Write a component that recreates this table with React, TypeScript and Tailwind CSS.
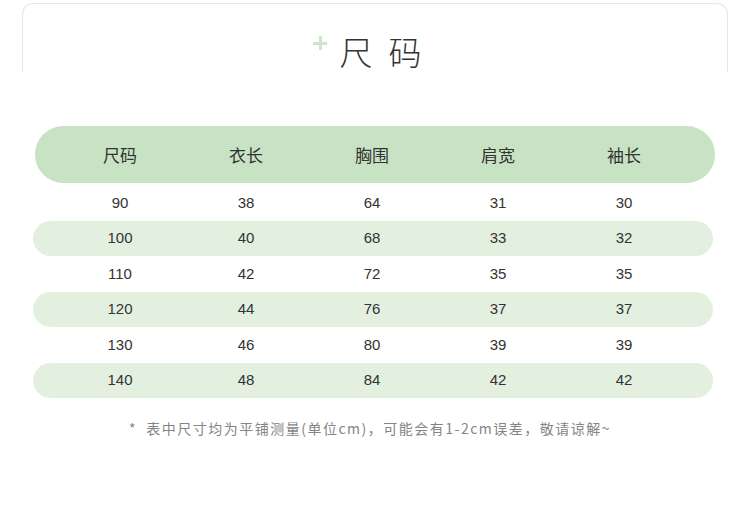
const headers = ["尺码", "衣长", "胸围", "肩宽", "袖长"]

const rows = [
  ["90", "38", "64", "31", "30"],
  ["100", "40", "68", "33", "32"],
  ["110", "42", "72", "35", "35"],
  ["120", "44", "76", "37", "37"],
  ["130", "46", "80", "39", "39"],
  ["140", "48", "84", "42", "42"],
]

const cjk = "font-['Noto_Sans_CJK_SC',sans-serif]"

export default function App() {
  return (
    <div className="w-[750px] h-[512px] bg-white overflow-hidden">
      <div className="pt-[3px] px-[22px]">
        <div className="h-[69px] border border-b-0 border-[#e6e8e3] rounded-t-[11px] flex justify-center">
          <div className="flex items-start pt-[27px]">
            {/* little green plus */}
            <div className="relative w-[14px] h-[14px] mt-[5px] mr-[13px]">
              <div className="absolute left-0 top-[6px] w-[14px] h-[3px] bg-[#d0e4cc]" />
              <div className="absolute left-[6px] top-0 w-[3px] h-[14px] bg-[#d0e4cc]" />
            </div>
            <span className={`text-[#333] text-[33px] leading-[40px] font-light tracking-[16px] ${cjk}`}>尺码</span>
          </div>
        </div>
      </div>

      <div className="mt-[54px]">
        <div className="ml-[35px] w-[680px] h-[57px] rounded-full bg-[#c8e3c4] flex items-center pl-[22px]">
          {headers.map((h) => (
            <div key={h} className={`w-[126px] text-center text-[17px] text-[#333] ${cjk}`}>
              {h}
            </div>
          ))}
        </div>

        <div className="mt-[2px]">
          {rows.map((r, i) => (
            <div
              key={r[0]}
              className={`ml-[33px] w-[680px] h-[35.5px] rounded-full flex items-center pl-[24px] ${
                i % 2 === 1 ? "bg-[#e3f0df]" : ""
              }`}
            >
              {r.map((v, j) => (
                <div key={j} className="w-[126px] text-center text-[15px] text-[#333] font-['Liberation_Sans',Arial,sans-serif]">
                  {v}
                </div>
              ))}
            </div>
          ))}
        </div>
      </div>

      <div className={`mt-[20px] pr-[10px] text-center text-[14px] tracking-[1.5px] text-[#858585] ${cjk}`}>
        * &nbsp;表中尺寸均为平铺测量(单位cm)，可能会有1-2cm误差，敬请谅解~
      </div>
    </div>
  )
}
